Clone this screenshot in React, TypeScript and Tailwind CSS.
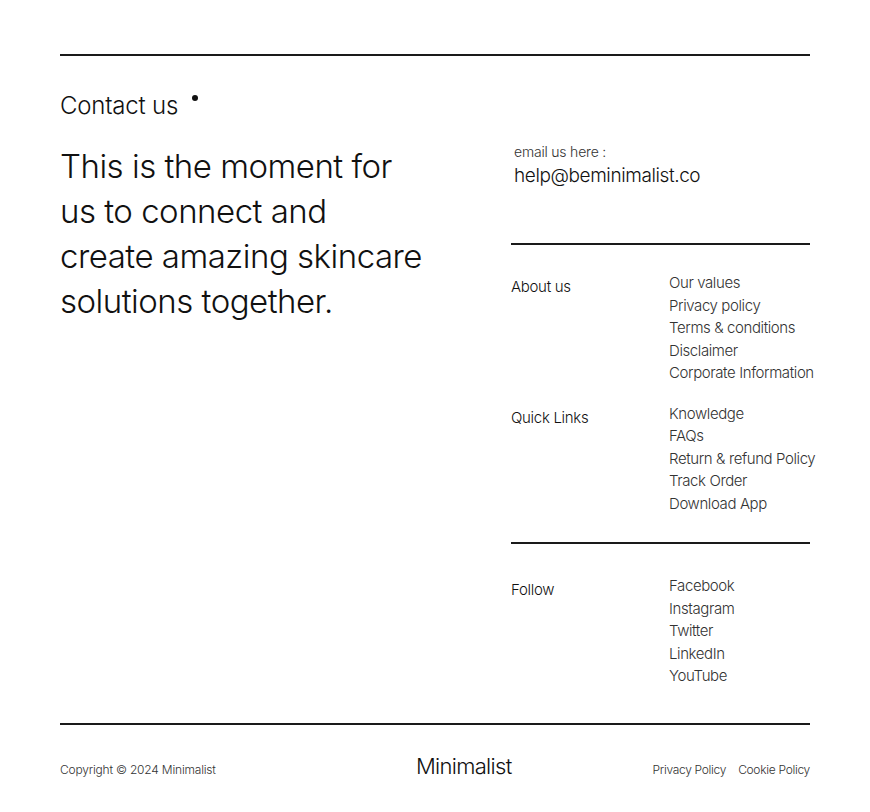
import React from 'react';

const about = ['Our values', 'Privacy policy', 'Terms & conditions', 'Disclaimer', 'Corporate Information'];
const quick = ['Knowledge', 'FAQs', 'Return & refund Policy', 'Track Order', 'Download App'];
const follow = ['Facebook', 'Instagram', 'Twitter', 'LinkedIn', 'YouTube'];

function LinkGroup({ title, links }: { title: string; links: string[] }) {
  return (
    <div className="flex">
      <div className="w-[158px] shrink-0 pt-[4px] text-[15px] leading-[22.5px] tracking-[-0.3px] text-[#111]">{title}</div>
      <ul className="flex flex-col">
        {links.map((l) => (
          <li key={l} className="text-[15px] leading-[22.5px] tracking-[-0.4px] text-[#333] whitespace-nowrap">
            <a href="#">{l}</a>
          </li>
        ))}
      </ul>
    </div>
  );
}

export default function App() {
  return (
    <footer className="min-h-screen w-full bg-white px-[60px] pt-[54px] font-['Inter',sans-serif] font-light text-[#111]">
      <div className="border-t-2 border-[#1a1a1a]" />

      <div className="flex">
        {/* Left: intro */}
        <div className="w-[451px] shrink-0 pt-[34px]">
          <div className="flex items-start">
            <h2 className="text-[24px] leading-[32px] tracking-[-0.2px]">Contact us</h2>
            <span className="ml-[14px] mt-[5px] block size-[6px] rounded-full bg-[#111]" />
          </div>
          <p className="mt-[22px] whitespace-nowrap text-[33px] leading-[45px] tracking-[-0.5px]">
            This is the moment for
            <br />
            us to connect and
            <br />
            create amazing skincare
            <br />
            solutions together.
          </p>
        </div>

        {/* Right: contact + links */}
        <div className="w-[299px] shrink-0">
          <div className="pl-[3px] pt-[87px]">
            <p className="text-[14px] leading-[18px] tracking-[-0.2px] text-[#333]">email us here :</p>
            <a href="#" className="mt-[1px] block text-[19px] leading-[28px] tracking-[-0.4px] text-[#111]">help@beminimalist.co</a>
          </div>
          <div className="mt-[53px] border-t-2 border-[#1a1a1a]" />
          <div className="flex flex-col gap-[18px] pt-[27px]">
            <LinkGroup title="About us" links={about} />
            <LinkGroup title="Quick Links" links={quick} />
          </div>
          <div className="mt-[27px] border-t-2 border-[#1a1a1a]" />
          <div className="pt-[31px]">
            <LinkGroup title="Follow" links={follow} />
          </div>
        </div>
      </div>

      <div className="mt-[35px] border-t-2 border-[#1a1a1a]" />
      <div className="flex items-baseline pt-[27px]">
        <p className="w-[356px] shrink-0 text-[12px] tracking-[-0.2px] text-[#333]">Copyright © 2024 Minimalist</p>
        <p className="text-[22px] leading-[28px] tracking-[-0.7px] text-[#111]">Minimalist</p>
        <div className="ml-auto flex gap-[12px] text-[12px] tracking-[-0.3px] text-[#333]">
          <a href="#">Privacy Policy</a>
          <a href="#">Cookie Policy</a>
        </div>
      </div>
    </footer>
  );
}
